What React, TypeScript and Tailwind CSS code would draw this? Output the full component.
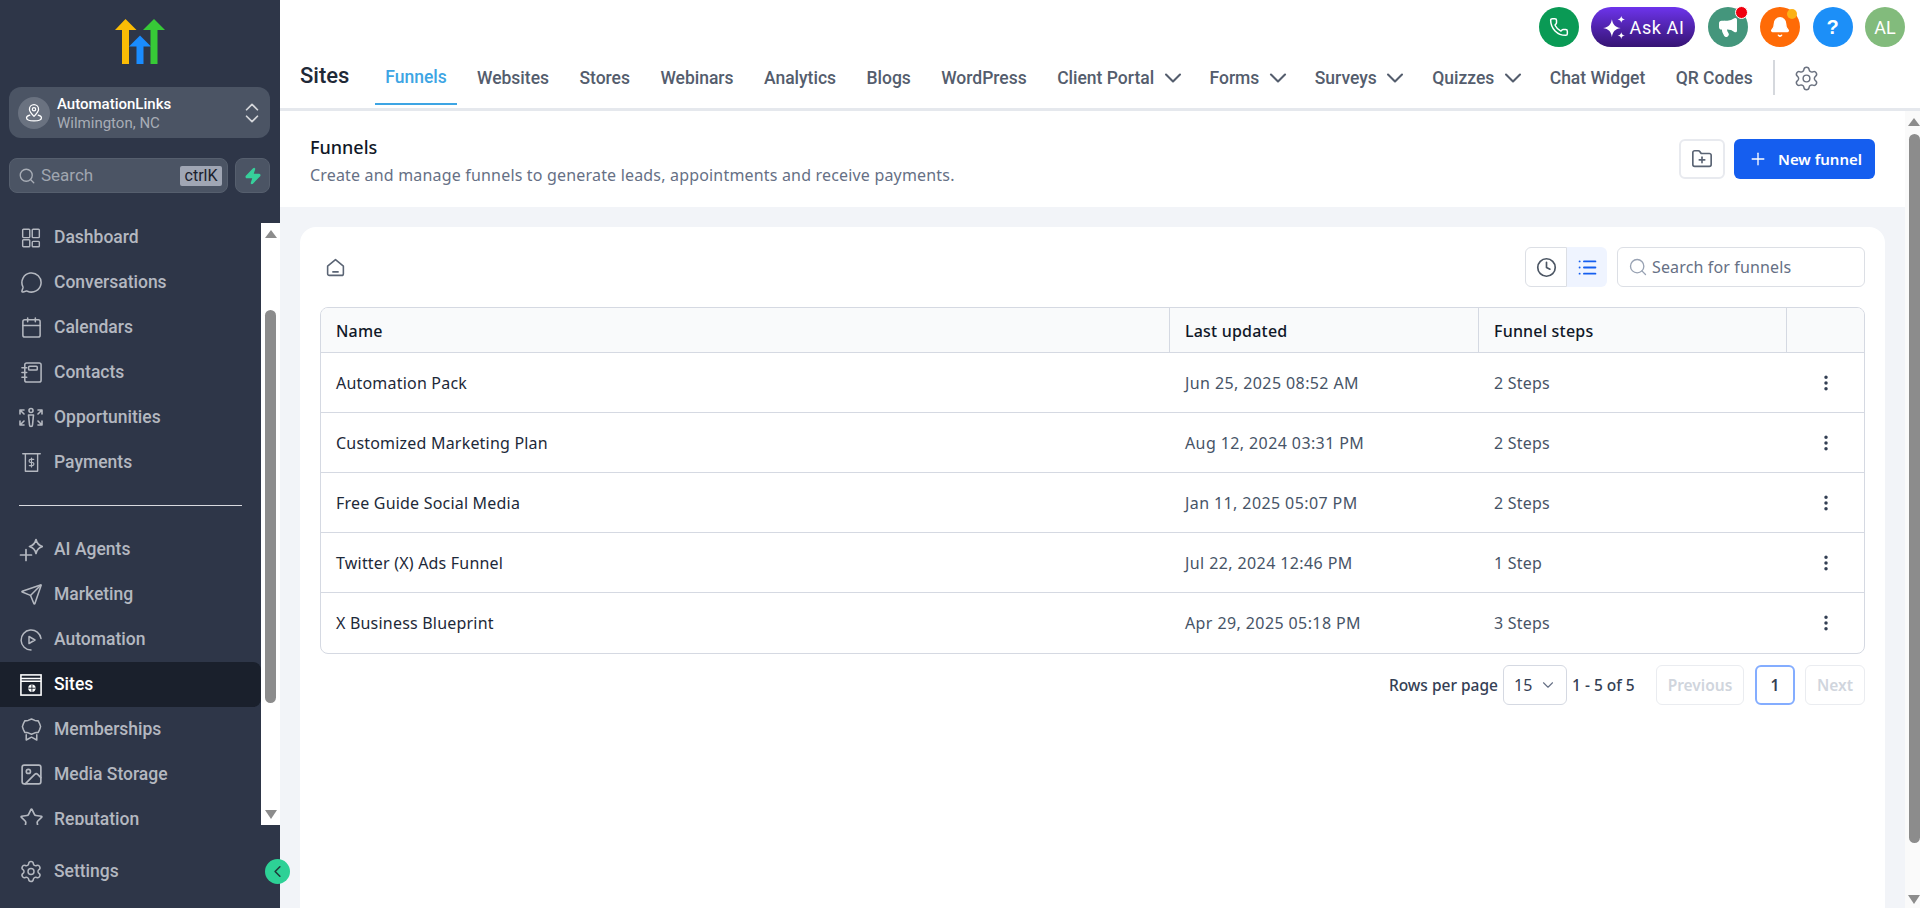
import React from "react";
import {
  ChevronDown, ChevronLeft, ChevronsUpDown, Clock, EllipsisVertical, FolderPlus, Image, List,
  MessageCircle, Phone, Plus, Search, Send, Settings, Star, Zap, Bell, Megaphone, Calendar,
} from "lucide-react";

const ic = "w-[23px] h-[23px] shrink-0";

function Svg({ children, cls = "w-6 h-6", sw = 1.6 }: { children: React.ReactNode; cls?: string; sw?: number }) {
  return (
    <svg viewBox="0 0 24 24" className={`${cls} shrink-0`} fill="none" stroke="currentColor" strokeWidth={sw} strokeLinecap="round" strokeLinejoin="round">
      {children}
    </svg>
  );
}
const OppIcon = () => (
  <Svg>
    <circle cx="12" cy="4.5" r="2" />
    <path d="M9.5 9h5l-1 10a1.5 1.5 0 0 1-3 0z" />
    <path d="M1 8V4h4M1 4l4 4M23 8V4h-4M23 4l-4 4M1 15v4h4M1 19l4-4M23 15v4h-4M23 19l-4-4" />
  </Svg>
);
const PayIcon = () => (
  <Svg cls="w-[21px] h-[21px]">
    <path d="M2 2h20M5 2v20h14V2" />
    <path d="M14.5 8.5h-3.5a1.7 1.7 0 0 0 0 3.5h2a1.7 1.7 0 0 1 0 3.5H9.5M12 7v10" strokeWidth="1.4" />
  </Svg>
);
const AiIcon = () => (
  <Svg sw={1.7}>
    <path d="M1.5 17h11M7 11.500v11" />
    <path d="M17 1.500C17.800 5 20 7.500 23.500 8.500 20 9.500 17.800 12 17 15.500 16.200 12 14 9.500 10.500 8.500 14 7.500 16.200 5 17 1.500z" />
  </Svg>
);
const SiteIcon = () => (
  <svg viewBox="0 0 24 24" className="w-[22px] h-[22px] shrink-0" fill="none" stroke="currentColor" strokeWidth="1.7">
    <rect x="1" y="1" width="22" height="22" />
    <path d="M1 5h22M1 8h22" />
    <circle cx="13" cy="15.500" r="4" fill="currentColor" stroke="none" />
    <path d="M9 15.500h8M13 11.500v8" stroke="#1a202c" strokeWidth="1" />
  </svg>
);
const DashIcon = () => (
  <svg viewBox="0 0 24 24" className="w-5 h-5 shrink-0" fill="none" stroke="currentColor" strokeWidth="1.7">
    <rect x="2" y="1.500" width="8.500" height="10" rx="1" />
    <rect x="13.500" y="1.500" width="8.500" height="10" rx="1" />
    <rect x="2" y="14" width="8.500" height="8.500" rx="1" />
    <rect x="13.500" y="16" width="8.500" height="6.500" rx="1" />
  </svg>
);
const ContactIcon = () => (
  <Svg cls="w-[23px] h-[23px]">
    <rect x="5" y="2" width="17" height="20" rx="2" />
    <rect x="9" y="5.500" width="9" height="4" rx="1" />
    <path d="M2 7h5M2 12h5M2 17h5" />
  </Svg>
);
const AutoIcon = () => (
  <Svg cls="w-6 h-6" sw={1.5}>
    <path d="M22 10.500A10 10 0 1 0 12 22" />
    <path d="M10 8.500l6 3.500-6 3.500z" />
  </Svg>
);
const MemberIcon = () => (
  <Svg cls="w-[23px] h-[23px]" sw={1.6}>
    <path d="M12 1l3.500 1.500 3.500.5 1.500 3 1 3-1 3-1.500 3-3.500.5-3.500 1.500-3.500-1.500-3.500-.5-1.500-3-1-3 1-3 1.500-3 3.500-.5z" />
    <path d="M6.500 17.500V23l5.500-3 5.500 3v-5.500" />
  </Svg>
);
const PinIcon = () => (
  <Svg cls="w-[20px] h-[20px]" sw={1.5}>
    <path d="M12 16c-3-3-5.500-5.500-5.500-8.500a5.500 5.500 0 0 1 11 0c0 3-2.500 5.500-5.500 8.500z" />
    <circle cx="12" cy="7.500" r="2" />
    <path d="M7 14.500c-2.500.7-4 1.800-4 3.200C3 20 7 21.500 12 21.500s9-1.500 9-3.800c0-1.400-1.500-2.500-4-3.200" />
  </Svg>
);
const Spark = () => (
  <svg viewBox="0 0 24 24" className="w-[25px] h-[25px]" fill="white">
    <path d="M9.500 4c.9 5 2.900 7.500 8.500 8.500-5.600 1-7.600 3.500-8.500 8.500-.9-5-2.900-7.500-8.500-8.500 5.600-1 7.600-3.500 8.500-8.500z" />
    <path d="M18.500 1c.4 2 1.200 2.800 3.500 3.250-2.300.45-3.100 1.250-3.500 3.250-.4-2-1.200-2.800-3.500-3.250C17.300 3.800 18.100 3 18.500 1z" />
    <path d="M18.500 16.500c.4 2 1.200 2.800 3.500 3.250-2.300.45-3.100 1.250-3.500 3.250-.4-2-1.200-2.800-3.500-3.250 2.300-.45 3.100-1.250 3.500-3.250z" />
  </svg>
);
const HomeIcon = () => (
  <svg viewBox="0 0 24 24" className="mt-[30px] ml-[5px] w-[21px] h-[21px] text-[#5a6474]" fill="none" stroke="currentColor" strokeWidth="1.8" strokeLinejoin="round" strokeLinecap="round">
    <path d="M3 10.500 12 3l9 7.500V19a2 2 0 0 1-2 2H5a2 2 0 0 1-2-2z" /><path d="M9 17h6" />
  </svg>
);
function Logo() {
  return (
    <svg viewBox="0 0 50 45" className="w-[50px] h-[45px]">
      <path d="M10.500 0 21.500 11H0z" fill="#fbbc05" />
      <rect x="7" y="10" width="7" height="35" fill="#fbbc05" />
      <path d="M25 16.500 36 27.500H14z" fill="#1a8cff" />
      <rect x="21.500" y="27" width="7" height="18" fill="#1a8cff" />
      <path d="M39 0 50 11H28z" fill="#37ca37" />
      <rect x="35.500" y="10" width="7" height="35" fill="#37ca37" />
    </svg>
  );
}

const navTop: [string, React.ReactNode][] = [
  ["Dashboard", <DashIcon />],
  ["Conversations", <MessageCircle className={ic} strokeWidth={1.6} />],
  ["Calendars", <Calendar className={ic} strokeWidth={1.6} />],
  ["Contacts", <ContactIcon />],
  ["Opportunities", <OppIcon />],
  ["Payments", <PayIcon />],
];
const navBottom: [string, React.ReactNode, boolean?][] = [
  ["AI Agents", <AiIcon />],
  ["Marketing", <Send className={ic} strokeWidth={1.6} />],
  ["Automation", <AutoIcon />],
  ["Sites", <SiteIcon />, true],
  ["Memberships", <MemberIcon />],
  ["Media Storage", <Image className="w-[25px] h-[25px] shrink-0" strokeWidth={1.6} />],
  ["Reputation", <Star className="w-[25px] h-[25px] shrink-0" strokeWidth={1.6} />],
];

function NavItem({ label, icon, active }: { label: string; icon: React.ReactNode; active?: boolean }) {
  return (
    <div className={`h-[45px] flex items-center pl-5 rounded-r-lg text-[17.5px] font-medium ${active ? "bg-[#1a202c] text-white" : "text-[#b4b8c0]"}`}>
      <span className="w-6 flex justify-center shrink-0 -ml-[1px]">{icon}</span>
      <span className="ml-[11px]">{label}</span>
    </div>
  );
}

const tabs: [string, boolean?][] = [
  ["Websites"], ["Stores"], ["Webinars"], ["Analytics"], ["Blogs"], ["WordPress"],
  ["Client Portal", true], ["Forms", true], ["Surveys", true], ["Quizzes", true], ["Chat Widget"], ["QR Codes"],
];

const rows = [
  ["Automation Pack", "Jun 25, 2025 08:52 AM", "2 Steps"],
  ["Customized Marketing Plan", "Aug 12, 2024 03:31 PM", "2 Steps"],
  ["Free Guide Social Media", "Jan 11, 2025 05:07 PM", "2 Steps"],
  ["Twitter (X) Ads Funnel", "Jul 22, 2024 12:46 PM", "1 Step"],
  ["X Business Blueprint", "Apr 29, 2025 05:18 PM", "3 Steps"],
];

function Circle({ cls, children, dot }: { cls: string; children: React.ReactNode; dot?: string }) {
  return (
    <div className={`relative w-10 h-10 rounded-full flex items-center justify-center text-white ${cls}`}>
      {children}
      {dot && <span className={`absolute rounded-full ${dot}`} />}
    </div>
  );
}

export default function App() {
  return (
    <div className="w-[1920px] h-[916px] overflow-hidden bg-white flex flex-col font-['Noto_Sans',sans-serif]">
      <div className="flex h-[908px]">
        <aside className="relative w-[280px] shrink-0 bg-[#2e3648] flex flex-col font-['Roboto',sans-serif] z-10">
          <div className="h-[87px] flex items-start justify-center pt-[19px]"><Logo /></div>
          <div className="ml-[9px] mr-[10px] h-[51px] rounded-xl bg-[#4b5464] flex items-center pl-[9px] pr-[5px]">
            <div className="w-8 h-8 rounded-full bg-[#6a7280] flex items-center justify-center text-white">
              <PinIcon />
            </div>
            <div className="ml-[7px] flex-1 leading-[19px] pt-[3px]">
              <div className="text-[15px] font-medium text-white">AutomationLinks</div>
              <div className="text-[15px] text-[#a8adb6]">Wilmington, NC</div>
            </div>
            <ChevronsUpDown className="w-[26px] h-[26px] text-[#d4d6da]" strokeWidth={1.6} />
          </div>
          <div className="ml-[9px] mr-[10px] mt-5 flex gap-[7px]">
            <div className="flex-1 h-[35px] rounded-lg bg-[#4b5464] flex items-center pl-2 pr-[5px] border border-[#565f6e]">
              <Search className="w-[18px] h-[18px] text-[#a8adb6]" strokeWidth={1.8} />
              <span className="ml-[5px] flex-1 text-[17px] text-[#a0a6b0] pt-[1px]">Search</span>
              <span className="h-5 w-[42px] text-center bg-[#a0a6b4] rounded-[2px] text-[#1a202c] text-[16px] leading-5">ctrlK</span>
            </div>
            <div className="w-[35px] h-[35px] rounded-lg bg-[#4b5464] flex items-center justify-center border border-[#565f6e]">
              <Zap className="w-[18px] h-[18px] text-[#37d09b]" fill="#37d09b" />
            </div>
          </div>
          <div className="mt-[30px] h-[602px] flex overflow-hidden">
            <div className="w-[261px] shrink-0 overflow-hidden">
              <div className="-mt-[8px]">
                {navTop.map(([l, i]) => <NavItem key={l} label={l} icon={i} />)}
              </div>
              <div className="mx-[19px] mt-[20px] mb-[21px] h-[1px] bg-[#d8dadf]" />
              {navBottom.map(([l, i, a]) => <NavItem key={l} label={l} icon={i} active={a} />)}
            </div>
            <div className="w-[19px] bg-white flex flex-col items-center">
              <div className="mt-[7px] w-0 h-0 border-x-[6.5px] border-x-transparent border-b-[8px] border-b-[#8c8c8c]" />
              <div className="mt-[72px] w-[11px] h-[393px] rounded-md bg-[#8c8c8c]" />
              <div className="mt-auto mb-[6px] w-0 h-0 border-x-[6.5px] border-x-transparent border-t-[9px] border-t-[#8c8c8c]" />
            </div>
          </div>
          <div className="mt-[24px]"><NavItem label="Settings" icon={<Settings className="w-[25px] h-[25px]" strokeWidth={1.5} />} /></div>
          <div className="absolute right-[-10px] top-[859px] w-[25px] h-[25px] rounded-full bg-[#2dd196] flex items-center justify-center text-[#1f3a3a]">
            <ChevronLeft className="w-[19px] h-[19px]" strokeWidth={2} />
          </div>
        </aside>

        <main className="flex-1 flex flex-col min-w-0">
          <header className="h-[111px] shrink-0 bg-white border-b-[3px] border-[#e5e8ed] flex flex-col font-['Roboto',sans-serif]">
            <div className="h-[52px] flex items-start justify-end pt-[7px] pr-[15px] gap-[12.5px]">
              <Circle cls="bg-[#0a9a55]"><Phone className="w-[20px] h-[20px]" strokeWidth={1.8} /></Circle>
              <div className="w-[104px] h-10 rounded-full bg-gradient-to-b from-[#6d34ec] to-[#361474] text-white flex items-center justify-center gap-[3px] text-[18px] tracking-[.6px]">
                <Spark />Ask AI
              </div>
              <Circle cls="bg-[#44967c]" dot="-top-[1px] right-0 w-[13px] h-[13px] bg-[#f0000f] border border-white"><Megaphone className="w-[22px] h-[22px]" fill="white" strokeWidth={1.6} /></Circle>
              <Circle cls="bg-[#ff6b07]" dot="top-[2px] right-[3px] w-[10px] h-[10px] bg-[#fbb216]"><Bell className="w-[22px] h-[22px]" fill="white" strokeWidth={1.6} /></Circle>
              <Circle cls="bg-[#1c8ff8]"><span className="text-[20px] font-bold font-['Liberation_Sans',sans-serif]">?</span></Circle>
              <Circle cls="bg-[#82bb7c]"><span className="text-[18px]">AL</span></Circle>
            </div>
            <div className="flex items-start h-[53px]">
              <div className="ml-[20px] w-[75px] text-[22px] font-medium text-[#1f2937] leading-[24px] pt-[12px]">Sites</div>
              <div className="h-[53px] w-[82px] flex justify-center relative text-[17.5px] font-medium text-[#3da5e4] leading-[24px] pt-[13px]">
                Funnels
                <span className="absolute bottom-0 left-0 right-0 h-[2px] bg-[#3da5e4]" />
              </div>
              <div className="flex items-start ml-[20px] text-[17.5px] font-medium text-[#545d6d] leading-[24px] pt-[14px] gap-[30.4px]">
                {tabs.map(([t, c]) => (
                  <div key={t} className="flex items-center">
                    {t}
                    {c && <ChevronDown className="ml-[4.5px] w-[28px] h-[28px] -my-[2px] -mr-[7.5px] text-[#545d6d]" strokeWidth={1.8} />}
                  </div>
                ))}
              </div>
              <div className="ml-[20px] mt-[8px] h-[35px] w-[2px] bg-[#d5d8dd]" />
              <Settings className="ml-[18px] w-[27px] h-[27px] mt-[13px] text-[#6b7280]" strokeWidth={1.3} />
            </div>
          </header>

          <div className="flex-1 flex min-h-0">
            <div className="w-[1625px] shrink-0 bg-[#f2f4f8] flex flex-col">
              <div className="h-[96px] bg-white flex items-start pl-[30px] pr-[30px]">
                <div className="mt-[24px] flex-1 text-[#667085]">
                  <div className="text-[18px] font-medium text-[#101828] leading-[24px]">Funnels</div>
                  <div className="text-[16px] leading-[24px] mt-[4px] tracking-[.18px]">Create and manage funnels to generate leads, appointments and receive payments.</div>
                </div>
                <div className="mt-[28px] flex gap-[9px]">
                  <div className="w-[46px] h-10 rounded-md border-2 border-[#e8eaef] bg-white flex items-center justify-center text-[#5a6474]">
                    <FolderPlus className="w-[22px] h-[22px]" strokeWidth={1.8} />
                  </div>
                  <div className="w-[141px] h-10 rounded-md bg-[#155eef] text-white flex items-center pl-[14px] text-[15px] font-semibold">
                    <Plus className="w-[20px] h-[20px]" strokeWidth={1.6} /><span className="ml-[10px]">New funnel</span>
                  </div>
                </div>
              </div>
              <div className="flex-1 ml-[20px] mr-[20px] mt-[20px] bg-white rounded-t-2xl px-5">
                <div className="h-[80px] flex items-start">
                  <HomeIcon />
                  <div className="ml-auto mt-5 flex">
                    <div className="w-[42px] h-10 rounded-l-md border border-[#dcdfe5] flex items-center justify-center text-[#4b5563]"><Clock className="w-[21px] h-[21px]" strokeWidth={1.9} /></div>
                    <div className="w-10 h-10 rounded-r-md bg-[#eff4ff] flex items-center justify-center text-[#155eef]"><List className="w-[21px] h-[21px]" strokeWidth={2.2} /></div>
                    <div className="ml-[10px] w-[248px] h-10 rounded-md border border-[#dcdfe5] flex items-center pl-[10px] text-[#667085] text-[16px] tracking-[.14px]">
                      <Search className="w-[20px] h-[20px] mr-[4px] text-[#98a2b3]" strokeWidth={1.6} />Search for funnels
                    </div>
                  </div>
                </div>
                <div className="rounded-lg border border-[#d5d9e2] overflow-hidden">
                  <div className="flex h-[45px] bg-[#f9fafb] border-b border-[#d5d9e2] text-[16px] font-medium text-[#101828] leading-[46px] tracking-[.2px]">
                    <div className="w-[849px] pl-[15px] border-r border-[#d5d9e2]">Name</div>
                    <div className="w-[309px] pl-[15px] border-r border-[#d5d9e2]">Last updated</div>
                    <div className="w-[308px] pl-[15px] border-r border-[#d5d9e2]">Funnel steps</div>
                    <div className="flex-1" />
                  </div>
                  {rows.map(([n, d, s], i) => (
                    <div key={n} className={`flex h-[60px] items-center text-[16px] ${i < rows.length - 1 ? "border-b border-[#d5d9e2]" : ""}`}>
                      <div className="w-[849px] pl-[15px] text-[#1d2939] tracking-[.2px]">{n}</div>
                      <div className="w-[309px] pl-[15px] text-[#475467] tracking-[.4px]">{d}</div>
                      <div className="w-[308px] pl-[15px] text-[#475467] tracking-[.2px]">{s}</div>
                      <div className="flex-1 flex justify-center text-[#344054]"><EllipsisVertical className="w-5 h-5" strokeWidth={2.2} /></div>
                    </div>
                  ))}
                </div>
                <div className="mt-[11px] flex items-center justify-end text-[15.5px] font-medium text-[#344054]">
                  <span className="pt-[2px]">Rows per page</span>
                  <div className="ml-[5px] w-[64px] h-[40px] rounded-md border border-[#d5d9e2] flex items-center pl-[10px] text-[16px] font-normal text-[#344054]">
                    15<ChevronDown className="ml-[7px] w-[18px] h-[18px] text-[#667085]" strokeWidth={1.5} />
                  </div>
                  <span className="ml-[5px] w-[84px] pt-[2px]">1 - 5 of 5</span>
                  <div className="w-[88px] h-[40px] pt-[2px] rounded-md border border-[#eaecf0] flex items-center justify-center text-[#d0d5dd] font-semibold">Previous</div>
                  <div className="ml-[11px] w-[40px] h-[40px] pt-[2px] rounded-md border-2 border-[#84adff] flex items-center justify-center font-semibold">1</div>
                  <div className="ml-[10px] w-[60px] h-[40px] pt-[2px] rounded-md border border-[#eaecf0] flex items-center justify-center text-[#d0d5dd] font-semibold">Next</div>
                </div>
              </div>
            </div>
            <div className="w-[15px] shrink-0 bg-[#fafafa] flex flex-col items-center">
              <div className="mt-[7px] ml-[3px] w-0 h-0 border-x-[6px] border-x-transparent border-b-[8px] border-b-[#8c8c8c]" />
              <div className="mt-[8px] ml-[4px] w-[11px] h-[709px] rounded-md bg-[#8c8c8c]" />
              <div className="mt-auto mb-[4px] ml-[3px] w-0 h-0 border-x-[6px] border-x-transparent border-t-[9px] border-t-[#8c8c8c]" />
            </div>
          </div>
        </main>
      </div>
    </div>
  );
}
